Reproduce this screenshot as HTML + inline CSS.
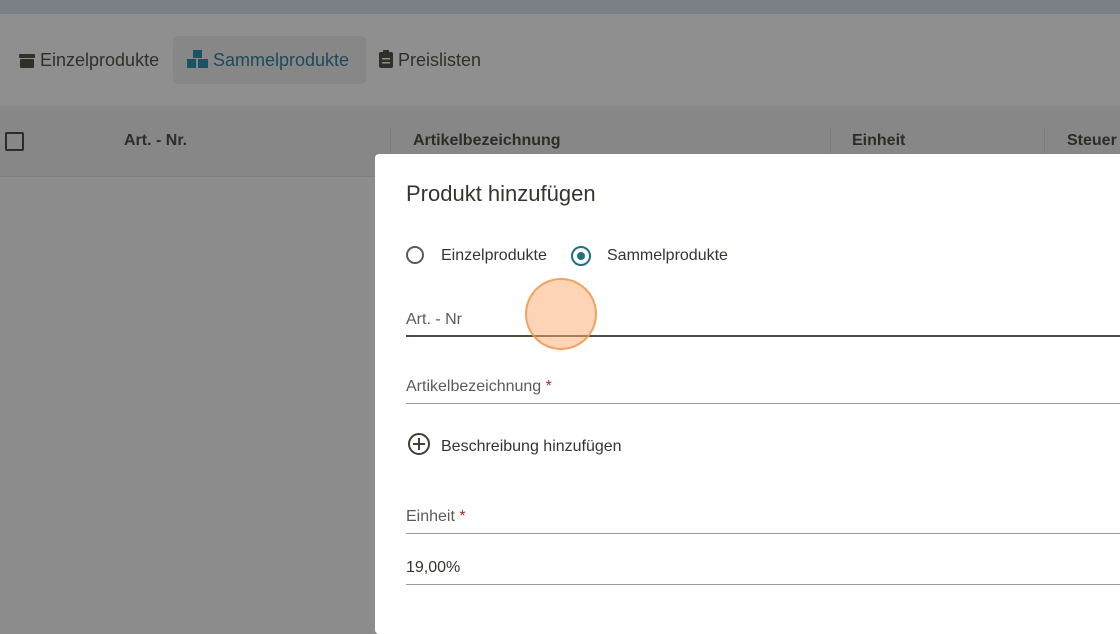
<!DOCTYPE html>
<html><head><style>
body{margin:0;width:1120px;height:626px;overflow:hidden;background:#8d8d8d;font-family:"Liberation Sans",sans-serif;position:relative}
.a{position:absolute}
.tab{position:absolute;top:36px;height:48px;line-height:48px;font-size:18px;color:#2e3128}
.hd{position:absolute;top:132px;font-size:16px;font-weight:bold;color:#2b2e26}
.lbl{position:absolute;left:406px;font-size:16px;color:#5a5d55}
.ln{position:absolute;left:406px;right:0;height:1px;background:#9a9a9a}
</style></head><body>
<div class="a" style="left:0;top:0;width:1120px;height:14px;background:#7b8087"></div>
<div class="a" style="left:0;top:14px;width:1120px;height:92px;background:#8f8f8f"></div>
<div class="a" style="left:173px;top:36px;width:193px;height:48px;background:#878787;border-radius:5px"></div>
<div class="a" style="left:0;top:106px;width:1120px;height:70px;background:#878787;border-bottom:1px solid #7f7f7f"></div>
<div class="tab" style="left:19px"><svg width="16" height="16" viewBox="0 0 16 16" style="vertical-align:-2px"><rect x="0" y="2" width="16" height="4" rx="1" fill="#2e3128"/><rect x="1" y="7" width="14" height="9" rx="1" fill="#2e3128"/></svg> Einzelprodukte</div>
<div class="tab" style="left:187px;color:#1d4a5a"><svg width="21" height="18" viewBox="0 0 21 18" style="vertical-align:-2px"><rect x="6" y="0" width="9" height="8" fill="#1a5266"/><rect x="0" y="9" width="9" height="9" fill="#1a5266"/><rect x="11" y="9" width="10" height="9" fill="#1a5266"/></svg> Sammelprodukte</div>
<div class="tab" style="left:379px"><svg width="14" height="18" viewBox="0 0 14 18" style="vertical-align:-2px"><rect x="0" y="2" width="14" height="16" rx="2" fill="#2e3128"/><rect x="4" y="0" width="6" height="4" rx="1" fill="#2e3128"/><rect x="3" y="8" width="8" height="1.5" fill="#8f8f8f"/><rect x="3" y="12" width="8" height="1.5" fill="#8f8f8f"/></svg> Preislisten</div>
<div class="a" style="left:5px;top:132px;width:15px;height:15px;border:2px solid #2b2e26;border-radius:2px"></div>
<div class="hd" style="left:124px">Art. - Nr.</div>
<div class="a" style="left:390px;top:127px;width:1px;height:26px;background:#7c7c7c"></div>
<div class="hd" style="left:413px">Artikelbezeichnung</div>
<div class="a" style="left:830px;top:127px;width:1px;height:26px;background:#7c7c7c"></div>
<div class="hd" style="left:852px">Einheit</div>
<div class="a" style="left:1044px;top:127px;width:1px;height:26px;background:#7c7c7c"></div>
<div class="hd" style="left:1067px">Steuer</div>
<div class="a" style="left:375px;top:154px;width:760px;height:480px;background:#fff;border-radius:4px"></div>
<div class="a" style="left:406px;top:181px;font-size:22px;color:#33362d">Produkt hinzufügen</div>
<div class="a" style="left:406px;top:246px;width:18px;height:18px;border:2px solid #5a5d55;border-radius:50%;box-sizing:border-box"></div>
<div class="a" style="left:441px;top:247px;font-size:16px;color:#33362d">Einzelprodukte</div>
<div class="a" style="left:571px;top:246px;width:20px;height:20px;border:2px solid #1f6f86;border-radius:50%;box-sizing:border-box"></div>
<div class="a" style="left:577px;top:252px;width:8px;height:8px;background:#1f6f86;border-radius:50%"></div>
<div class="a" style="left:607px;top:247px;font-size:16px;color:#33362d">Sammelprodukte</div>
<div class="lbl" style="top:311px">Art. - Nr</div>
<div class="ln" style="top:335px;height:2px;background:#4e5142"></div>
<div class="lbl" style="top:378px">Artikelbezeichnung<span style="color:#b02a2a"> *</span></div>
<div class="ln" style="top:403px"></div>
<div class="a" style="left:408px;top:433px;width:22px;height:22px;border:2px solid #3d4035;border-radius:50%;box-sizing:border-box"></div>
<div class="a" style="left:413px;top:443px;width:12px;height:2px;background:#3d4035"></div>
<div class="a" style="left:418px;top:438px;width:2px;height:12px;background:#3d4035"></div>
<div class="a" style="left:441px;top:438px;font-size:16px;color:#33362d">Beschreibung hinzufügen</div>
<div class="lbl" style="top:508px">Einheit<span style="color:#b02a2a"> *</span></div>
<div class="ln" style="top:533px"></div>
<div class="a" style="left:406px;top:559px;font-size:16px;color:#33362d">19,00%</div>
<div class="ln" style="top:584px"></div>
<div class="a" style="left:525px;top:278px;width:68px;height:68px;border-radius:50%;background:rgba(251,170,110,0.5);border:2px solid rgba(240,150,70,0.8)"></div>
</body></html>
